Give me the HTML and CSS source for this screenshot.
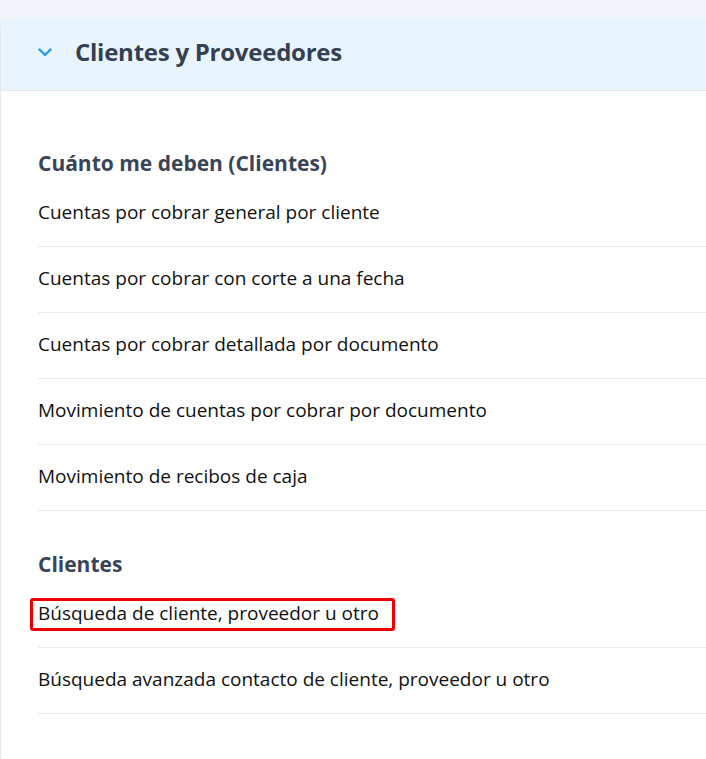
FILE: index.html
```html
<!DOCTYPE html>
<html lang="es">
<head>
<meta charset="utf-8">
<title>Clientes y Proveedores</title>
<link rel="stylesheet" href="styles.css">
</head>
<body>
<div class="page">
  <section class="card">
    <header class="card-header">
      <svg class="chevron" width="14" height="9" viewBox="0 0 14 9"><path d="M1.5 1.5 L7 7 L12.5 1.5" fill="none" stroke="#1e9bf5" stroke-width="2.4" stroke-linecap="round" stroke-linejoin="round"/></svg>
      <h1 class="card-title">Clientes y Proveedores</h1>
    </header>
    <div class="card-body">
      <h2 class="group-title first">Cuánto me deben (Clientes)</h2>
      <ul class="list">
        <li class="item"><span class="item-text">Cuentas por cobrar general por cliente</span></li>
        <li class="item"><span class="item-text">Cuentas por cobrar con corte a una fecha</span></li>
        <li class="item"><span class="item-text">Cuentas por cobrar detallada por documento</span></li>
        <li class="item"><span class="item-text">Movimiento de cuentas por cobrar por documento</span></li>
        <li class="item"><span class="item-text">Movimiento de recibos de caja</span></li>
      </ul>
      <h2 class="group-title">Clientes</h2>
      <ul class="list">
        <li class="item"><span class="item-text highlight">Búsqueda de cliente, proveedor u otro</span></li>
        <li class="item"><span class="item-text">Búsqueda avanzada contacto de cliente, proveedor u otro</span></li>
      </ul>
    </div>
  </section>
</div>
</body>
</html>
```

FILE: styles.css
```css
* { box-sizing: border-box; }
html, body { margin: 0; padding: 0; }
body {
  background: #f1f5f9;
  font-family: "Open Sans", "Noto Sans", sans-serif;
  color: #111;
  width: 706px;
  height: 759px;
  overflow: hidden;
}
.page {
  padding-top: 19px;
}
.card {
  background: #fff;
  border-left: 1px solid #e4e7eb;
  border-top-left-radius: 6px;
  height: 740px;
  overflow: hidden;
}
.card-header {
  background: #e9f5fe;
  height: 72px;
  border-bottom: 1px solid #e3e7ec;
  display: flex;
  align-items: center;
  padding-left: 37px;
  padding-bottom: 6px;
}
.chevron { display: block; margin-top: 2px; }
.card-title {
  margin: 0 0 0 23px;
  font-size: 24px;
  line-height: 30px;
  font-weight: 700;
  color: #364052;
  letter-spacing: -0.25px;
}
.card-body {
  padding: 0 0 0 37px;
}
.group-title {
  margin: 0;
  font-size: 21px;
  font-weight: 700;
  color: #3a4457;
  height: 34px;
  line-height: 32px;
  margin-top: 37px;
}
.group-title.first { margin-top: 56px; }
.list {
  list-style: none;
  margin: 0;
  padding: 0;
}
.item {
  height: 66px;
  border-bottom: 1px solid #e8eaed;
  display: flex;
  align-items: center;
  font-size: 19px;
  color: #111;
}
.item-text {
  display: inline-block;
  line-height: 24px;
  padding-bottom: 4px;
}
.highlight {
  border: 3px solid #ee0000;
  border-radius: 3px;
  padding: 0 13px 3px 5px;
  margin-left: -8px;
  margin-top: -1px;
}
```
